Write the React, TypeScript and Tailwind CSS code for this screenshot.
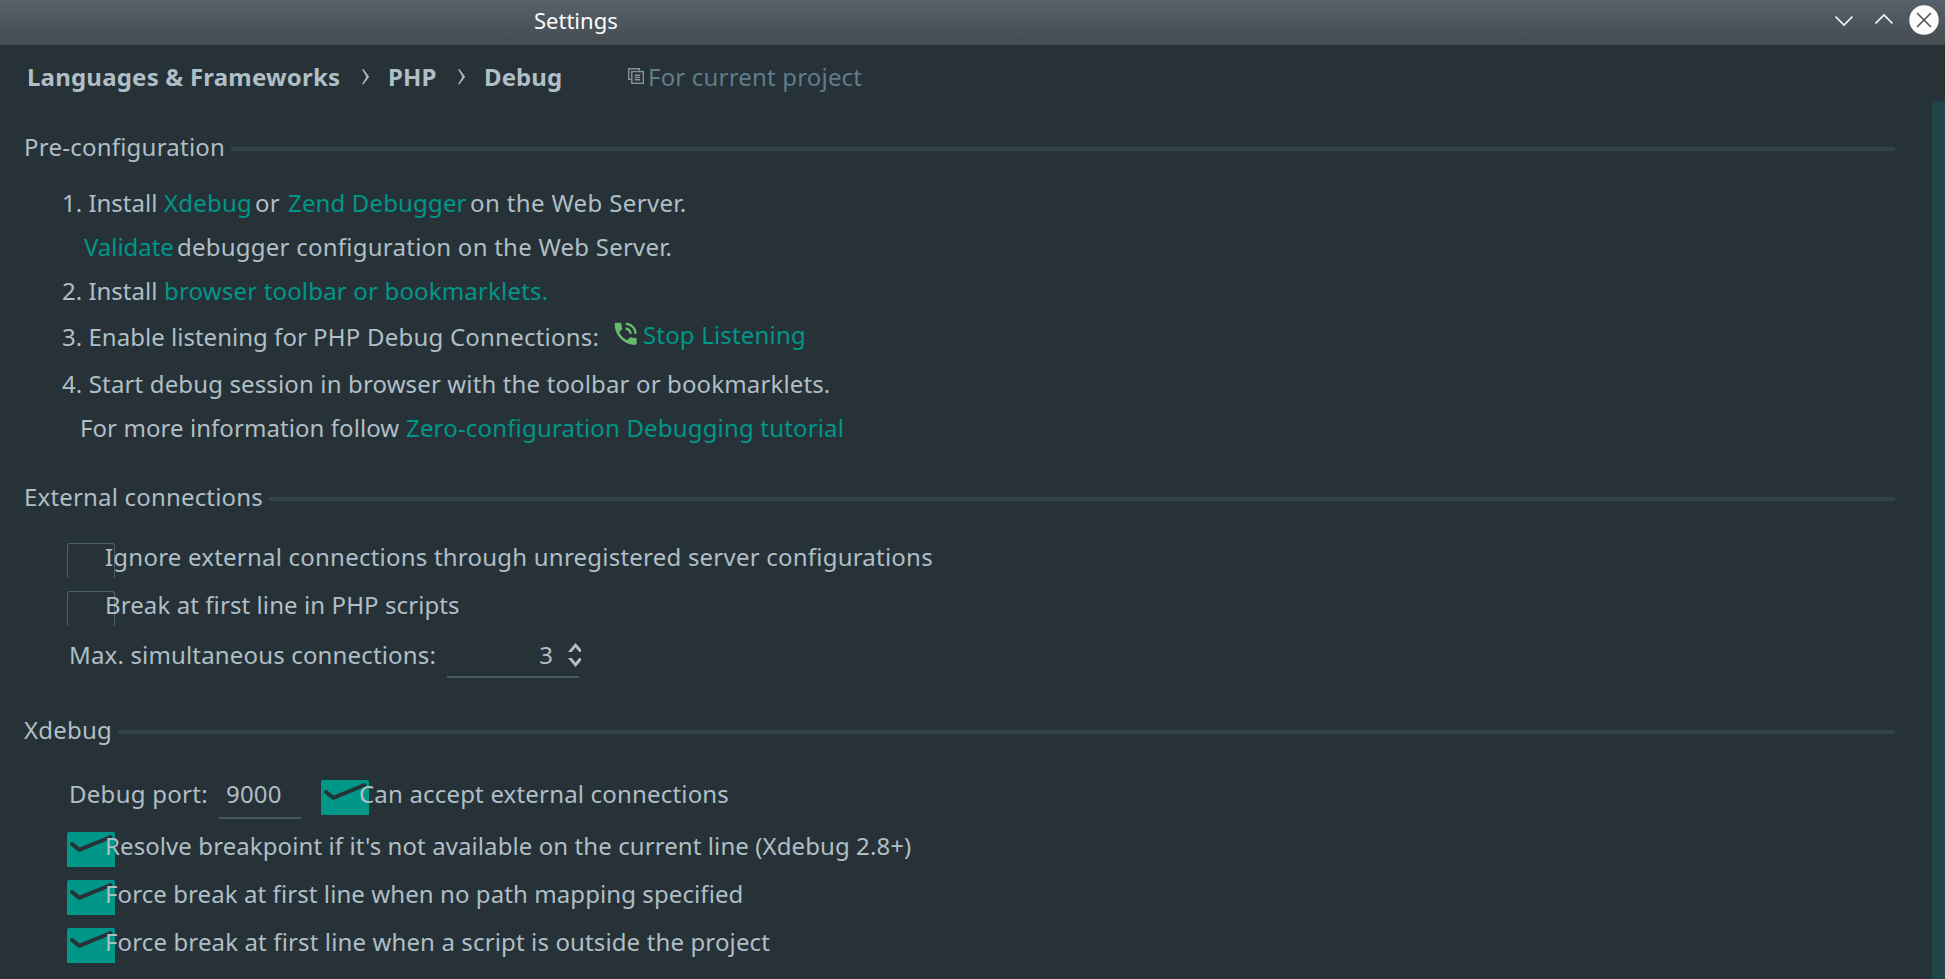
import type { ReactNode } from "react";

function TitleBar() {
  return (
    <header className="flex h-[45px] shrink-0 items-start justify-between bg-linear-to-b from-[#566169] to-[#474e54] to-90% pl-[534px] pr-[6px] pt-[5px]">
      <h1 className="h-[30px] text-[22px] leading-[30px] text-[#fcfcfc]">Settings</h1>
      <div className="flex h-[30px] items-center gap-[20px] text-[#fcfcfc]">
        <svg className="h-[20px] w-[20px]" viewBox="0 0 20 20" fill="none" stroke="currentColor" strokeWidth="1.6">
          <path d="M1.5 6.500 10 15 18.500 6.500" />
        </svg>
        <svg className="h-[20px] w-[20px]" viewBox="0 0 20 20" fill="none" stroke="currentColor" strokeWidth="1.6">
          <path d="M1.500 13.500 10 5 18.500 13.500" />
        </svg>
        <svg className="-ml-[5px] h-[30px] w-[30px]" viewBox="0 0 30 30">
          <circle cx="15" cy="15" r="14.700" fill="#fcfcfc" />
          <path d="m8 8 14 14M22 8 8 22" fill="none" stroke="#4b545a" strokeWidth="1.6" />
        </svg>
      </div>
    </header>
  );
}

function CrumbArrow({ className }: { className: string }) {
  return (
    <svg className={`mt-[9px] h-[16px] w-[8px] shrink-0 ${className}`} viewBox="0 0 8 16" fill="currentColor">
      <path d="M0 0.200 1.500 0.200 7.100 7.700 1.500 15.200 0 15.200 4.500 7.700Z" />
    </svg>
  );
}

function ProjectIcon() {
  return (
    <svg className="mt-[8px] h-[16px] w-[16px] shrink-0" viewBox="0 0 16 16" fill="none" stroke="#87939a" strokeWidth="1.400">
      <path d="M11.400 2.800V0.700H0.700V11.400H3" />
      <rect x="3.800" y="3.600" width="11.500" height="11.700" />
      <path d="M6.600 7.300h5.600M6.600 9.500h5.600M6.600 11.700h5.600" />
    </svg>
  );
}

function Breadcrumbs() {
  return (
    <nav className="flex h-[56px] shrink-0 items-start pl-[27px] pt-[15px]">
      <b className="w-[335px] tracking-[0.2px]">Languages &amp; Frameworks</b>
      <CrumbArrow className="mr-[18px]" />
      <b className="w-[70px] tracking-[0.1px]">PHP</b>
      <CrumbArrow className="mr-[18px]" />
      <b className="w-[144px] tracking-[0.1px]">Debug</b>
      <ProjectIcon />
      <span className="ml-[4px] tracking-[0.18px] text-[#607d8b]">For current project</span>
    </nav>
  );
}

function SectionTitle({ children, className }: { children: ReactNode; className: string }) {
  return (
    <div className="mr-[37px] flex h-[33px] items-start">
      <h2 className={`shrink-0 pl-[24px] ${className}`}>{children}</h2>
      <div className="mt-[17px] h-[4px] flex-1 bg-[#32424a]" />
    </div>
  );
}

function Link({ children, className }: { children: ReactNode; className: string }) {
  return <a className={`shrink-0 text-[#009688] ${className}`}>{children}</a>;
}

function Check({ checked, label, className }: { checked?: boolean; label: string; className: string }) {
  return (
    <label className="flex h-[38px] shrink-0 items-start">
      {checked ? (
        <svg className="mt-[3px] h-[35px] w-[48px] shrink-0 rounded-t-[2px] bg-[#009688]" viewBox="0 0 48 35" fill="none" stroke="#263238" strokeWidth="4" strokeLinecap="round" strokeLinejoin="round">
          <path d="M5 12 12.200 17.800 43.500 5" />
        </svg>
      ) : (
        <span className="mt-[3px] h-[35px] w-[48px] shrink-0 rounded-t-[3px] border border-b-0 border-[#48616d]" />
      )}
      <span className={`relative ${className}`}>{label}</span>
    </label>
  );
}

function PreConfiguration() {
  return (
    <section>
      <SectionTitle className="w-[231px] tracking-[0.23px]">Pre-configuration</SectionTitle>
      <div className="mt-[23px] flex h-[33px] pl-[62px]">
        <span className="w-[102px]">1. Install</span>
        <Link className="w-[91px] tracking-[0.2px]">Xdebug</Link>
        <span className="w-[33px] tracking-[0.2px]">or</span>
        <Link className="w-[182px] tracking-[0.15px]">Zend Debugger</Link>
        <span className="tracking-[0.36px]">on the Web Server.</span>
      </div>
      <div className="mt-[11px] flex h-[33px] pl-[84px]">
        <Link className="w-[93px] tracking-[-0.05px]">Validate</Link>
        <span className="tracking-[0.24px]">debugger configuration on the Web Server.</span>
      </div>
      <div className="mt-[11px] flex h-[33px] pl-[62px]">
        <span className="w-[102px]">2. Install</span>
        <Link className="tracking-[0.17px]">browser toolbar or bookmarklets.</Link>
      </div>
      <div className="mt-[11px] flex h-[35px] items-start pl-[62px]">
        <span className="mt-[2px] w-[251px] tracking-[0.02px]">3. Enable listening for</span>
        <span className="mt-[2px] w-[298px] tracking-[0.22px]">PHP Debug Connections:</span>
        <svg className="mt-[1px] h-[30px] w-[30px] shrink-0" viewBox="0 0 24.500 24.500" fill="#66bb6a">
          <path d="M20 15.500c-1.250 0-2.450-.2-3.570-.57-.35-.11-.74-.03-1.020.24l-2.200 2.200c-2.830-1.440-5.150-3.750-6.590-6.590l2.200-2.210c.28-.26.36-.65.25-1C8.700 6.450 8.500 5.250 8.500 4c0-.55-.45-1-1-1H4c-.55 0-1 .45-1 1 0 9.390 7.610 17 17 17 .55 0 1-.45 1-1v-3.500c0-.55-.45-1-1-1zM19 12h2c0-4.970-4.030-9-9-9v2c3.870 0 7 3.130 7 7zm-4 0h2c0-2.760-2.240-5-5-5v2c1.660 0 3 1.340 3 3z" />
        </svg>
        <Link className="ml-[2px] tracking-[0.17px]">Stop Listening</Link>
      </div>
      <div className="mt-[14px] flex h-[33px] pl-[62px]">
        <span className="tracking-[0.135px]">4. Start debug session in browser with the toolbar or bookmarklets.</span>
      </div>
      <div className="mt-[11px] flex h-[33px] pl-[80px]">
        <span className="w-[326px] tracking-[0.065px]">For more information follow</span>
        <Link className="tracking-[0.17px]">Zero-configuration Debugging tutorial</Link>
      </div>
    </section>
  );
}

function ExternalConnections() {
  return (
    <section className="mt-[36px]">
      <SectionTitle className="w-[269px] tracking-[0.18px]">External connections</SectionTitle>
      <div className="mt-[27px] flex flex-col gap-[10px] pl-[67px]">
        <Check className="-ml-[10px] tracking-[0.22px]" label="Ignore external connections through unregistered server configurations" />
        <Check className="-ml-[10px] tracking-[0.09px]" label="Break at first line in PHP scripts" />
      </div>
      <div className="mt-[12px] flex h-[40px] items-start pl-[69px]">
        <span className="w-[378px] tracking-[0.16px]">Max. simultaneous connections:</span>
        <div className="flex h-[40px] w-[132px] items-start justify-end border-b-2 border-[#455a64]">
          <span>3</span>
          <svg className="-mr-[2px] ml-[15px] mt-[5px] h-[24px] w-[13px] shrink-0" viewBox="0 0 13 24" fill="currentColor">
            <path d="M0 9 7.500 0 13 6.200V9H11.200L7.500 4.500 3.700 9ZM0 15H3.700L7.500 19.500 11.200 15H13V17.800L7.500 24Z" />
          </svg>
        </div>
      </div>
    </section>
  );
}

function Xdebug() {
  return (
    <section className="mt-[35px]">
      <SectionTitle className="w-[118px] tracking-[0.2px]">Xdebug</SectionTitle>
      <div className="mt-[31px] flex h-[42px] items-start pl-[69px]">
        <span className="w-[150px] tracking-[0.27px]">Debug port:</span>
        <div className="mr-[20px] h-[42px] w-[82px] border-b-2 border-[#455a64] pl-[7px] tracking-[0.15px]">9000</div>
        <Check checked className="-ml-[10px] tracking-[0.18px]" label="Can accept external connections" />
      </div>
      <div className="mt-[10px] flex flex-col gap-[10px] pl-[67px]">
        <Check checked className="-ml-[10px] tracking-[0.085px]" label="Resolve breakpoint if it's not available on the current line (Xdebug 2.8+)" />
        <Check checked className="-ml-[10px] tracking-[0.085px]" label="Force break at first line when no path mapping specified" />
        <Check checked className="-ml-[10px] tracking-[0.13px]" label="Force break at first line when a script is outside the project" />
      </div>
    </section>
  );
}

export default function App() {
  return (
    <div className="flex h-[979px] w-[1945px] flex-col overflow-hidden bg-[#263238] font-['Noto_Sans',sans-serif] text-[24px] leading-[33px] whitespace-nowrap text-[#b0bec5]">
      <TitleBar />
      <Breadcrumbs />
      <main className="flex min-h-0 flex-1">
        <div className="flex-1 pt-[29px]">
          <PreConfiguration />
          <ExternalConnections />
          <Xdebug />
        </div>
        <div className="w-[13px] shrink-0 rounded-tl-[4px] bg-[#1f4546]" />
      </main>
    </div>
  );
}
